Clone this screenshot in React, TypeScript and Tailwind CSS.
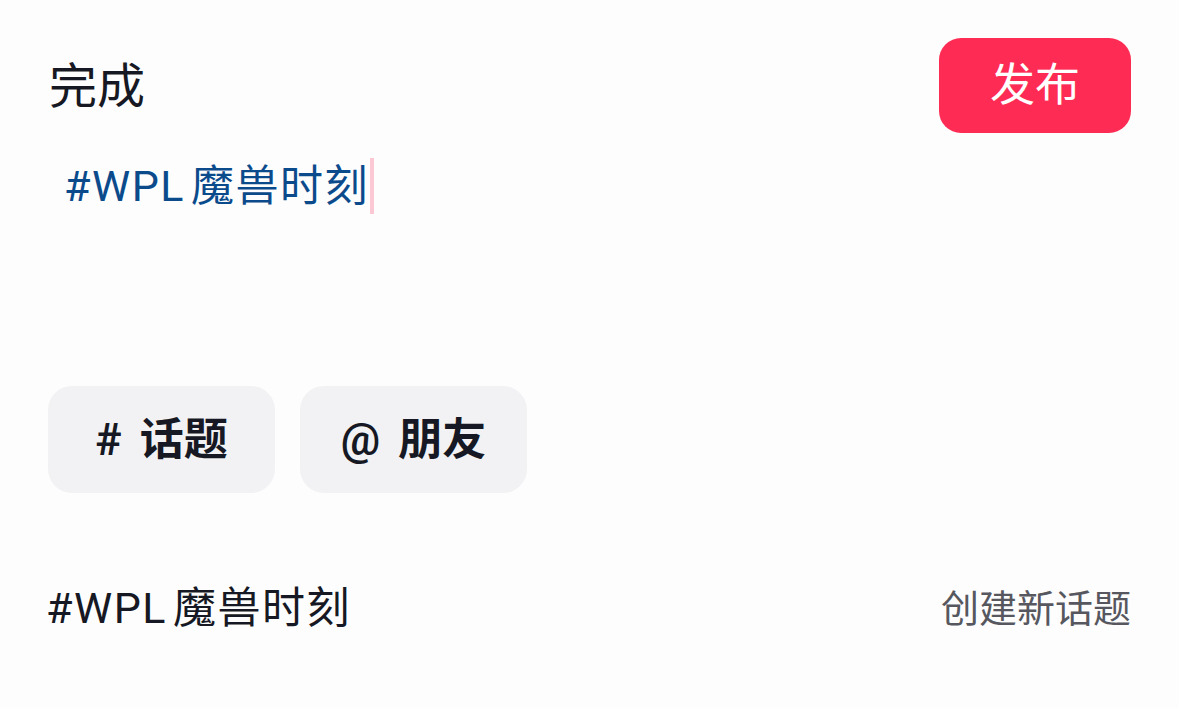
import React from 'react';

const FONT = { fontFamily: 'Roboto, "Noto Sans CJK SC", sans-serif' };

const Chip: React.FC<{ symbol: string; label: string }> = ({ symbol, label }) => (
  <button className="w-[227px] h-[107px] rounded-[24px] bg-[#f2f2f4] flex items-center justify-center gap-[18px] text-[44px] font-semibold text-[#161823] leading-none">
    <span>{symbol}</span>
    <span>{label}</span>
  </button>
);

export default function App() {
  return (
    <div className="w-[1179px] h-[708px] bg-[#fdfdfd] overflow-hidden flex flex-col pl-[48px] pr-[48px] pt-[38px]" style={FONT}>
      <div className="flex items-center justify-between">
        <span className="text-[48px] text-[#161823] leading-none ml-[1px] mt-[2px]">完成</span>
        <button className="w-[192px] h-[95px] rounded-[22px] bg-[#fe2c55] text-white text-[45px] leading-none flex items-center justify-center">
          发布
        </button>
      </div>

      <div className="flex items-center mt-[25px] ml-[16px] h-[56px]">
        <span className="text-[43px] text-[#0b4b8c] leading-none tracking-[1.5px]">
          #WPL<span className="ml-[6px]">魔兽时刻</span>
        </span>
        <span className="w-[4px] h-[56px] bg-[#fcc8d4] ml-[1px]" />
      </div>

      <div className="flex gap-[25px] mt-[172px]">
        <Chip symbol="#" label="话题" />
        <Chip symbol="@" label="朋友" />
      </div>

      <div className="flex items-center justify-between mt-[94px] -ml-[2px]">
        <span className="text-[43px] text-[#161823] leading-none tracking-[1.5px]">
          #WPL<span className="ml-[6px]">魔兽时刻</span>
        </span>
        <span className="text-[38px] text-[#57585f] leading-none">创建新话题</span>
      </div>
    </div>
  );
}
